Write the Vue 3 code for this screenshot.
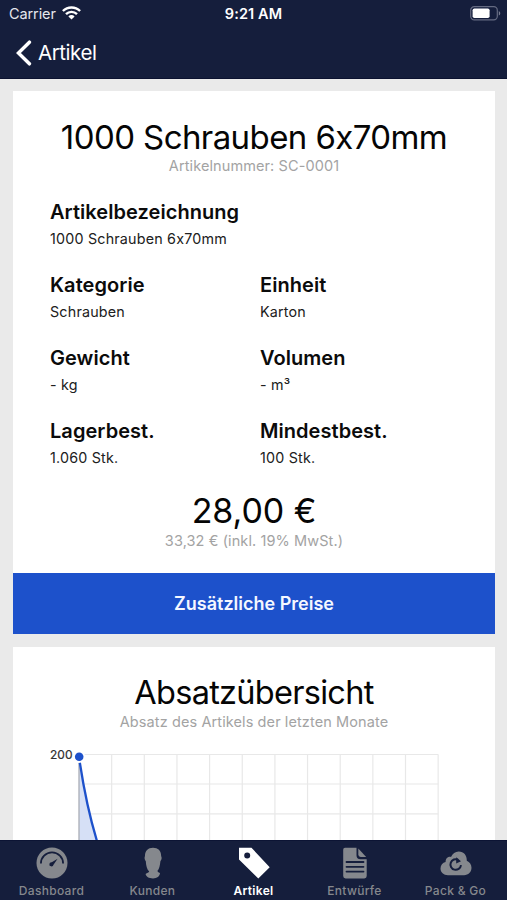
<script setup>
const fields = [
  { label: 'Artikelbezeichnung', value: '1000 Schrauben 6x70mm', wide: true },
  { label: 'Kategorie', value: 'Schrauben' },
  { label: 'Einheit', value: 'Karton' },
  { label: 'Gewicht', value: '- kg' },
  { label: 'Volumen', value: '- m³' },
  { label: 'Lagerbest.', value: '1.060 Stk.' },
  { label: 'Mindestbest.', value: '100 Stk.' },
]
const columns = Array.from({ length: 11 }, (_, i) => 79 + (i + 1) * 32.65)
const rows = [8.5, 38, 67.8]
const tabs = [
  { id: 'dashboard', label: 'Dashboard' },
  { id: 'kunden', label: 'Kunden' },
  { id: 'artikel', label: 'Artikel', active: true },
  { id: 'entwuerfe', label: 'Entwürfe' },
  { id: 'pack', label: 'Pack & Go' },
]
</script>

<template>
  <div class="screen">
    <header class="header">
      <div class="status">
        <div class="carrier">
          <span>Carrier</span>
          <svg width="19" height="14" viewBox="0 0 19 14">
            <g fill="none" stroke="#fff" stroke-width="2.4">
              <path d="M.9 5C5.7.3 13.3.3 18.1 5" />
              <path d="M4 8.1c3-3 8-3 11 0" />
            </g>
            <path d="M6.4 10.4a4.4 4.4 0 0 1 6.2 0L9.5 13.6z" fill="#fff" />
          </svg>
        </div>
        <span class="time">9:21 AM</span>
        <div class="battery">
          <svg width="31" height="15" viewBox="0 0 31 15">
            <rect x=".7" y=".7" width="26.6" height="13.2" rx="3.6" fill="none" stroke="#656b82" stroke-width="1.2" />
            <rect x="2.6" y="2.5" width="17" height="9.6" rx="1.8" fill="#fff" />
            <path d="M28.8 5v4.6c2-.9 2-3.7 0-4.6z" fill="#777c90" />
          </svg>
        </div>
      </div>
      <nav class="back">
        <svg width="16" height="26" viewBox="0 0 16 26">
          <path d="M13.4 2.2 2.4 13l11 10.8" fill="none" stroke="#fff" stroke-width="3.5" stroke-linecap="round" stroke-linejoin="miter" />
        </svg>
        <span>Artikel</span>
      </nav>
    </header>

    <main class="content">
      <section class="card">
        <h1 class="title name">1000 Schrauben 6x70mm</h1>
        <p class="sub">Artikelnummer: SC-0001</p>
        <dl class="fields">
          <div v-for="f in fields" :key="f.label" class="field" :class="{ wide: f.wide }">
            <dt>{{ f.label }}</dt>
            <dd>{{ f.value }}</dd>
          </div>
        </dl>
        <div class="title price">28,00 €</div>
        <p class="sub">33,32 € (inkl. 19% MwSt.)</p>
        <button class="more">Zusätzliche Preise</button>
      </section>

      <section class="card">
        <h2 class="title sales">Absatzübersicht</h2>
        <p class="sub">Absatz des Artikels der letzten Monate</p>
        <svg class="chart" width="482" height="100" viewBox="13 0 482 100">
          <g stroke="#e8e8e8" stroke-width="1.2">
            <line v-for="x in columns" :key="x" :x1="x" :x2="x" y1="8.5" y2="100" />
            <line v-for="y in rows" :key="y" x1="79" x2="438.2" :y1="y" :y2="y" />
          </g>
          <path d="M79 16C84 48 90 75 98 98V100H79z" fill="#d6e0f6" />
          <path d="M79 17V100" stroke="#a9adb5" stroke-width="1.3" />
          <path d="M79.8 16.5C84 44 90 73 98.2 99" fill="none" stroke="#1d51cb" stroke-width="2.3" />
          <circle cx="79.2" cy="10.7" r="6" fill="#fff" />
          <circle cx="79.2" cy="10.7" r="4.3" fill="#1d51cb" />
          <text x="50" y="12.9" class="axis">200</text>
        </svg>
      </section>
    </main>

    <footer class="tabs">
      <div v-for="t in tabs" :key="t.id" class="tab" :class="{ active: t.active }">
        <svg width="34" height="34" viewBox="0 0 34 34" fill="currentColor">
          <template v-if="t.id === 'dashboard'">
            <circle cx="17" cy="17" r="15.5" />
            <path d="M5.9 17.4a11.1 11.1 0 0 1 22.2 0" fill="none" stroke="#151e3c" stroke-width="1.8" />
            <path d="M22.6 12.8 18.5 18.7a2.1 2.1 0 1 1-1.7-2.5z" fill="#151e3c" />
          </template>
          <template v-else-if="t.id === 'kunden'">
            <path d="M17 1.8c5 0 8.1 3 8.1 7.8 0 1 .7 1.2.5 2.8-.2 1.4-.8 2-1.2 2.8-.4 4.4-1.2 7.8-2.9 9.6.1 1 .6 1.6 2.5 2.2-.3 3.3-3 5.4-7 5.4-4.3 0-6.9-1.6-7.4-4.3 1.4-1.5 3.1-1.3 3.6-2.6-2.3-2-3.1-5.9-3.4-10.3-.6-.7-1.1-1.7-1.2-2.8-.1-1.2.4-1.8.4-2.8 0-4.6 3-7.8 8-7.8z" />
          </template>
          <template v-else-if="t.id === 'artikel'">
            <path fill-rule="evenodd" d="M2 1.8h12.5L32.7 21.2 21.3 32.5 2 13.4zM10.2 6.5a3 3 0 1 0 0 6 3 3 0 0 0 0-6z" />
          </template>
          <template v-else-if="t.id === 'entwuerfe'">
            <path d="M7 1.8h11.5v7.4a4 4 0 0 0 4 4h6.2V30a2.4 2.4 0 0 1-2.4 2.4H7.6A2.4 2.4 0 0 1 5.2 30V3.8a2 2 0 0 1 1.8-2z" />
            <path d="M20.3 2.4 28.2 11h-5.5a2.4 2.4 0 0 1-2.4-2.4z" />
            <path d="M8.5 16h17M8.5 20.8h17M8.5 25.6h17" stroke="#151e3c" stroke-width="1.8" stroke-linecap="round" />
          </template>
          <template v-else>
            <path d="M9 29.2C4.6 29.2 1.5 26.3 1.5 22.5c0-3.3 2.1-5.8 5.1-6.5-.1-3.9 2.8-5.6 5.4-5.1 1.5-3.3 4.2-5.4 7.7-5.4 5.1 0 8.3 3.8 8.1 9.2 2.9 1.2 4.7 3.9 4.7 7.1 0 4.2-3.2 7.4-7.4 7.4z" />
            <path d="M19.2 13.8a5.3 5.3 0 1 0 2.8 5.4" fill="none" stroke="#151e3c" stroke-width="2" />
            <path d="M17.2 11.2 22 15.3 17.2 17.6z" fill="#151e3c" />
          </template>
        </svg>
        <span>{{ t.label }}</span>
      </div>
    </footer>
  </div>
</template>

<style>
body { margin: 0; background: #eaeaea; overflow: hidden; }
</style>

<style scoped>
.screen {
  width: 507px;
  height: 900px;
  display: flex;
  flex-direction: column;
  overflow: hidden;
  background: #eaeaea;
  color: #0b0b0b;
  font-family: Inter, "Liberation Sans", sans-serif;
  font-feature-settings: "calt" 0;
}
.header { height: 79px; flex: none; box-sizing: border-box; background: #151e3c; color: #fff; border-bottom: 1px solid #0b1230; }
.status { height: 28px; display: grid; grid-template-columns: 1fr auto 1fr; align-items: center; font-size: 14.5px; }
.carrier { display: flex; align-items: center; gap: 6px; padding-left: 9px; color: #e5e7ed; letter-spacing: -.1px; }
.carrier span { margin-top: -2px; }
.carrier svg { margin-top: -2px; }
.time { font-weight: 600; margin-top: -1px; letter-spacing: .1px; }
.battery { display: flex; justify-content: flex-end; padding-right: 6px; }
.battery svg { margin-top: -1px; }
.back { display: flex; align-items: center; gap: 6px; padding-left: 16px; height: 49px; font-size: 20.5px; letter-spacing: -.45px; }
.content { flex: 1; min-height: 0; overflow: hidden; padding: 12px 12px 0 13px; display: flex; flex-direction: column; gap: 13px; }
.card { background: #fff; flex: none; }
.title { margin: 0; font-size: 34px; line-height: 40px; font-weight: 400; text-align: center; color: #050505; }
.name { padding-top: 26px; font-size: 33px; letter-spacing: -.59px; }
.sales { padding-top: 26px; font-size: 32.5px; letter-spacing: -.72px; }
.price { margin-top: 20px; letter-spacing: -.05px; }
.sub { margin: 0; font-size: 14.5px; line-height: 18px; text-align: center; color: #a3a3a3; letter-spacing: .1px; }
.price + .sub { padding-top: 1px; }
.fields { margin: 24px 0 0; padding: 0 37px; display: grid; grid-template-columns: 210px 1fr; row-gap: 20px; }
.field { height: 53px; }
.wide { grid-column: 1 / -1; }
dt { font-size: 20px; line-height: 26px; font-weight: 600; letter-spacing: .05px; }
dd { margin: 1px 0 0; font-size: 14.3px; line-height: 26px; color: #202020; letter-spacing: .2px; }
.more { display: block; width: 100%; height: 61px; margin: 23.4px 0 0; padding: 0; border: 0; background: #1d51cb; color: #f4f7ff; font: 600 18px Inter, sans-serif; }
.chart { display: block; margin-top: 15px; }
.axis { font-size: 12px; fill: #303030; stroke: #303030; stroke-width: .2px; }
.tabs { height: 60px; flex: none; box-sizing: border-box; border-top: 1px solid #0c1434; background: #151e3c; display: grid; grid-template-columns: repeat(5, 1fr); padding: 0 1px; }
.tab { display: flex; flex-direction: column; align-items: center; padding-top: 5px; color: #85888d; font-size: 12px; line-height: 16px; font-weight: 500; letter-spacing: .3px; }
.tab span { margin-top: 3px; white-space: nowrap; }
.active { color: #fff; font-weight: 600; }
</style>
